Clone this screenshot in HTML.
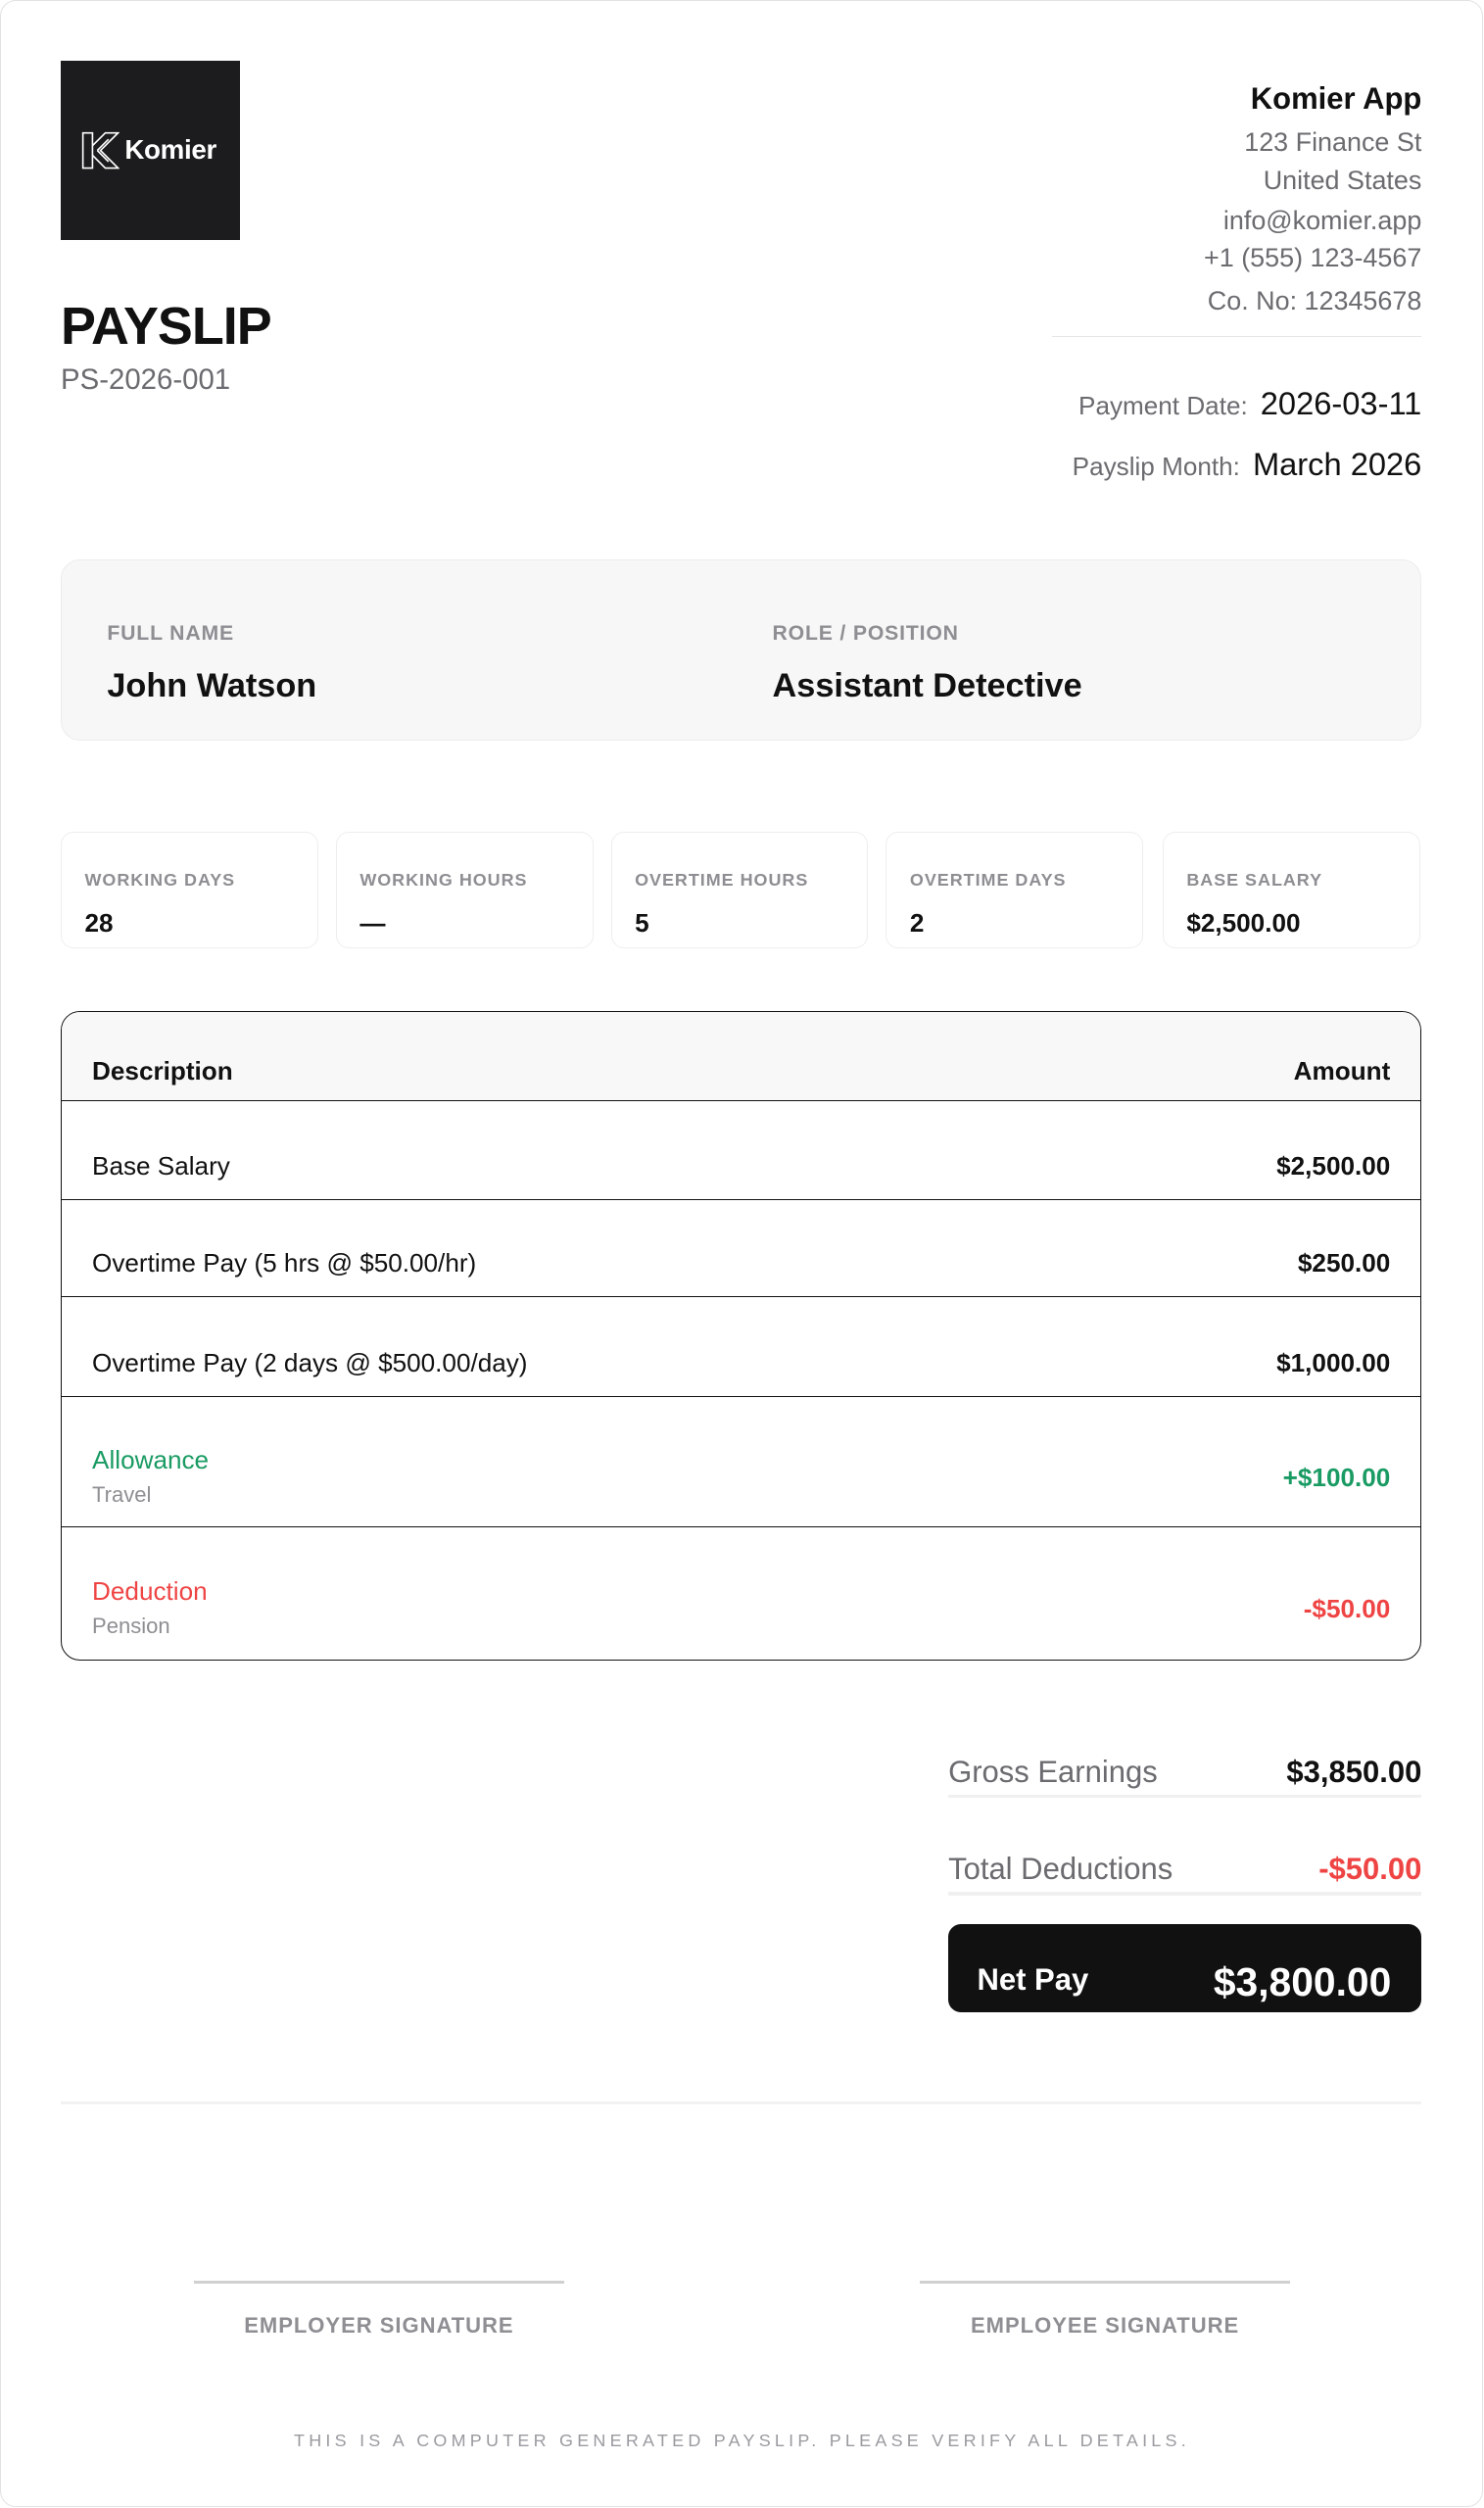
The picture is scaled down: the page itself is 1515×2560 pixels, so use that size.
<!DOCTYPE html>
<html><head><meta charset="utf-8"><style>
html,body{margin:0;padding:0;background:#fff}
body{zoom:1.63254;width:928px;height:1568px;position:relative;overflow:hidden;font-family:"Liberation Sans",sans-serif;color:#111}
.a{position:absolute;white-space:nowrap}
.card{position:absolute;left:0;top:0;width:926px;height:1566px;border:1px solid #e2e2e2;border-radius:10px}
.r{text-align:right}
.g{color:#6b6b70}
.lbl{font-size:13px;font-weight:bold;color:#8e8e93;letter-spacing:.5px}
.sl{font-size:11px;font-weight:bold;color:#8e8e93;letter-spacing:.6px}
.stat{position:absolute;top:520px;width:161px;height:73px;border:1px solid #eee;border-radius:8px;box-sizing:border-box}
.row{position:absolute;left:0;right:0;border-top:1px solid #111}
</style></head><body>
<div class="card"></div>
<div class="a" style="left:38px;top:38px;width:112px;height:112px;background:#1c1c1e"></div>
<svg class="a" style="left:51px;top:82px" width="24" height="24" viewBox="0 0 24 24" fill="none" stroke="#fff" stroke-width="1"><path d="M1 1h6v22H1z"/><path d="M7 9l8-8h8l-11 11 11 11h-8l-8-8"/><path d="M10 12l7-7M10 12l7 7"/></svg>
<div class="a" style="left:78px;top:84px;color:#fff;font-weight:bold;font-size:17px;letter-spacing:-.2px">Komier</div>
<div class="a" style="left:38px;top:185px;font-size:33px;font-weight:bold;letter-spacing:-.6px">PAYSLIP</div>
<div class="a g" style="left:38px;top:227px;font-size:18px">PS-2026-001</div>
<div class="a r" style="right:39px;top:51px;font-size:19px;font-weight:bold">Komier App</div>
<div class="a r g" style="right:39px;top:77px;font-size:16.5px;line-height:24px">123 Finance St<br>United States</div>
<div class="a r g" style="right:39px;top:127px;font-size:16.5px;line-height:23px">info@komier.app<br>+1 (555) 123-4567</div>
<div class="a r g" style="right:39px;top:179px;font-size:16.5px">Co. No: 12345678</div>
<div class="a" style="left:658px;top:210px;width:231px;height:1px;background:#e5e5e5"></div>
<div class="a r" style="right:39px;top:241px;font-size:20px"><span class="g" style="font-size:16px;margin-right:8px">Payment Date:</span>2026-03-11</div>
<div class="a r" style="right:39px;top:279px;font-size:20px"><span class="g" style="font-size:16px;margin-right:8px">Payslip Month:</span>March 2026</div>
<div class="a" style="left:38px;top:350px;width:851px;height:113px;background:#f7f7f7;border:1px solid #ececec;border-radius:12px;box-sizing:border-box"></div>
<div class="a lbl" style="left:67px;top:389px">FULL NAME</div>
<div class="a lbl" style="left:483px;top:389px">ROLE / POSITION</div>
<div class="a" style="left:67px;top:417px;font-size:21px;font-weight:bold">John Watson</div>
<div class="a" style="left:483px;top:417px;font-size:21px;font-weight:bold">Assistant Detective</div>
<div class="stat" style="left:38px"></div><div class="stat" style="left:210px"></div><div class="stat" style="left:382px"></div><div class="stat" style="left:554px"></div><div class="stat" style="left:727px"></div>
<div class="a sl" style="left:53px;top:544px">WORKING DAYS</div><div class="a" style="left:53px;top:568px;font-size:16px;font-weight:bold">28</div>
<div class="a sl" style="left:225px;top:544px">WORKING HOURS</div><div class="a" style="left:225px;top:568px;font-size:16px;font-weight:bold">—</div>
<div class="a sl" style="left:397px;top:544px">OVERTIME HOURS</div><div class="a" style="left:397px;top:568px;font-size:16px;font-weight:bold">5</div>
<div class="a sl" style="left:569px;top:544px">OVERTIME DAYS</div><div class="a" style="left:569px;top:568px;font-size:16px;font-weight:bold">2</div>
<div class="a sl" style="left:742px;top:544px">BASE SALARY</div><div class="a" style="left:742px;top:568px;font-size:16px;font-weight:bold">$2,500.00</div>
<div class="a" style="left:38px;top:632px;width:851px;height:406px;border:1px solid #111;border-radius:12px;box-sizing:border-box;overflow:hidden">
 <div class="a" style="left:0;top:0;right:0;height:56px;background:#f8f8f8"></div>
 <div class="a" style="left:19px;top:28px;font-size:16px;font-weight:bold">Description</div>
 <div class="a" style="right:19px;top:28px;font-size:16px;font-weight:bold">Amount</div>
 <div class="row" style="top:55px"></div><div class="row" style="top:117px"></div><div class="row" style="top:178px"></div><div class="row" style="top:240px"></div><div class="row" style="top:322px"></div>
 <div class="a" style="left:19px;top:87px;font-size:16px">Base Salary</div><div class="a" style="right:19px;top:87px;font-size:16px;font-weight:bold">$2,500.00</div>
 <div class="a" style="left:19px;top:148px;font-size:16px">Overtime Pay (5 hrs @ $50.00/hr)</div><div class="a" style="right:19px;top:148px;font-size:16px;font-weight:bold">$250.00</div>
 <div class="a" style="left:19px;top:210px;font-size:16px">Overtime Pay (2 days @ $500.00/day)</div><div class="a" style="right:19px;top:210px;font-size:16px;font-weight:bold">$1,000.00</div>
 <div class="a" style="left:19px;top:271px;font-size:16px;color:#1a9b63">Allowance</div><div class="a" style="left:19px;top:294px;font-size:13.5px;color:#8e8e93">Travel</div><div class="a" style="right:19px;top:282px;font-size:16px;color:#1a9b63;font-weight:bold">+$100.00</div>
 <div class="a" style="left:19px;top:353px;font-size:16px;color:#ef4444">Deduction</div><div class="a" style="left:19px;top:376px;font-size:13.5px;color:#8e8e93">Pension</div><div class="a" style="right:19px;top:364px;font-size:16px;color:#ef4444;font-weight:bold">-$50.00</div>
</div>
<div class="a g" style="left:593px;top:1097px;font-size:19px">Gross Earnings</div><div class="a r" style="right:39px;top:1097px;font-size:19px;font-weight:bold">$3,850.00</div>
<div class="a" style="left:593px;top:1122px;width:296px;height:2px;background:#f0f0f0"></div>
<div class="a g" style="left:593px;top:1158px;font-size:19px">Total Deductions</div><div class="a r" style="right:39px;top:1158px;font-size:19px;color:#ef4444;font-weight:bold">-$50.00</div>
<div class="a" style="left:593px;top:1183px;width:296px;height:2px;background:#f0f0f0"></div>
<div class="a" style="left:593px;top:1203px;width:296px;height:55px;background:#111;border-radius:8px"></div>
<div class="a" style="left:611px;top:1227px;font-size:19px;font-weight:bold;color:#fff">Net Pay</div>
<div class="a r" style="right:58px;top:1225px;font-size:25px;font-weight:bold;color:#fff">$3,800.00</div>
<div class="a" style="left:38px;top:1314px;width:851px;height:2px;background:#f2f2f2"></div>
<div class="a" style="left:121px;top:1426px;width:232px;height:2px;background:#d0d0d0"></div>
<div class="a" style="left:575px;top:1426px;width:232px;height:2px;background:#d0d0d0"></div>
<div class="a" style="left:121px;width:232px;top:1446px;text-align:center;font-size:13.5px;font-weight:bold;color:#8e8e93;letter-spacing:.6px">EMPLOYER SIGNATURE</div>
<div class="a" style="left:575px;width:232px;top:1446px;text-align:center;font-size:13.5px;font-weight:bold;color:#8e8e93;letter-spacing:.6px">EMPLOYEE SIGNATURE</div>
<div class="a" style="left:0;width:928px;top:1520px;text-align:center;font-size:11px;color:#9a9aa0;letter-spacing:2.6px">THIS IS A COMPUTER GENERATED PAYSLIP. PLEASE VERIFY ALL DETAILS.</div>
</body></html>
